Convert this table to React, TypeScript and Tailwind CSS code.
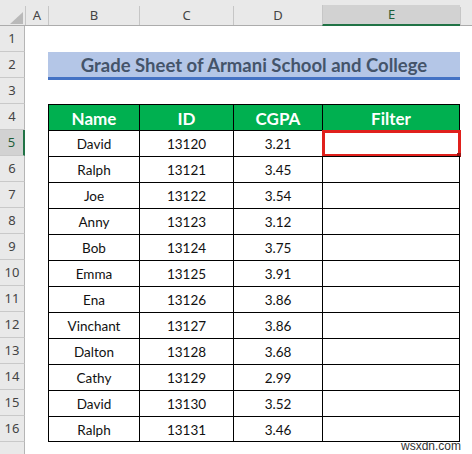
import React from 'react';

// column widths measured from the sheet (px, incl. left grid line)
const COLS = [
  { key: 'A', w: 'w-[23px]' },
  { key: 'B', w: 'w-[91px]' },
  { key: 'C', w: 'w-[94px]' },
  { key: 'D', w: 'w-[89px]' },
  { key: 'E', w: 'w-[138px]' },
];

const STUDENTS: [string, string, string][] = [
  ['David', '13120', '3.21'],
  ['Ralph', '13121', '3.45'],
  ['Joe', '13122', '3.54'],
  ['Anny', '13123', '3.12'],
  ['Bob', '13124', '3.75'],
  ['Emma', '13125', '3.91'],
  ['Ena', '13126', '3.86'],
  ['Vinchant', '13127', '3.86'],
  ['Dalton', '13128', '3.68'],
  ['Cathy', '13129', '2.99'],
  ['David', '13130', '3.52'],
  ['Ralph', '13131', '3.46'],
];

const UI_FONT = "[font-family:'Noto_Sans',sans-serif]";
const CELL_FONT = "[font-family:Lato,'Liberation_Sans',sans-serif]";

function RowHeader({ n, active }: { n: number | null; active?: boolean }) {
  return (
    <div
      className={`w-[25px] h-[26px] shrink-0 flex items-center justify-center border-b border-[#c9c9c9] text-[13px] ${UI_FONT} ${
        active
          ? 'bg-[#d2d2d2] text-[#1e5e3a] border-r-2 border-r-[#217346]'
          : 'bg-[#e9e9e9] text-[#444] border-r border-r-[#b5b5b5]'
      }`}
    >
      {n}
    </div>
  );
}

function ColumnHeaders() {
  return (
    <div className="flex h-[26px] bg-[#e9e9e9] border-b border-[#acacac]">
      <div className="w-[25px] shrink-0 relative">
        <div className="absolute left-[10px] top-[12px] w-0 h-0 border-l-[13px] border-l-transparent border-b-[12px] border-b-[#b9b9b9]" />
      </div>
      {COLS.map((c) => (
        <div key={c.key} className={`${c.w} shrink-0 flex flex-col`}>
          <div className="h-[7px]" />
          <div
            className={`flex-1 flex items-center justify-center border-l border-[#c6c6c6] text-[13px] ${UI_FONT} ${
              c.key === 'E' ? 'bg-[#d2d2d2] text-[#1e5e3a] border-b-2 border-b-[#217346] -mb-px' : 'text-[#444]'
            }`}
          >
            {c.key}
          </div>
        </div>
      ))}
      <div className="flex-1 flex flex-col">
        <div className="h-[7px]" />
        <div className="flex-1 border-l border-[#c6c6c6]" />
      </div>
    </div>
  );
}

function EmptyRow({ n }: { n: number | null }) {
  return (
    <div className="flex h-[26px]">
      <RowHeader n={n} />
    </div>
  );
}

function TitleRow() {
  return (
    <div className="flex h-[26px] items-start">
      <RowHeader n={2} />
      <div className="w-[23px] shrink-0" />
      <div
        className={`w-[412px] h-[28px] shrink-0 bg-[#b4c6e7] border-b-[3px] border-[#4472c4] flex items-center justify-center pt-[2px] text-[18.5px] font-bold text-[#44546a] ${CELL_FONT}`}
      >
        Grade Sheet of Armani School and College
      </div>
    </div>
  );
}

function TableRow({ n, cells, head, last, active }: { n: number; cells: string[]; head?: boolean; last?: boolean; active?: boolean }) {
  return (
    <div className="flex h-[26px]">
      <RowHeader n={n} active={active} />
      <div className="w-[23px] shrink-0" />
      {cells.map((t, i) => (
        <div
          key={i}
          className={`${COLS[i + 1].w} shrink-0 relative flex items-center justify-center pt-[2px] border-l border-t border-black ${CELL_FONT} ${
            i === 3 ? 'border-r' : ''
          } ${last ? 'border-b' : ''} ${head ? 'bg-[#00b050] text-white font-bold text-[17px]' : 'bg-white text-[#111] text-[13.5px]'}`}
        >
          {t}
          {active && i === 3 && (
            <div className="absolute -left-px -top-px -right-[2px] -bottom-px border-[3px] border-[#e0201c]">
              <div className="absolute -right-[3px] -bottom-[3px] w-[4px] h-[4px] bg-[#9b1414]" />
            </div>
          )}
        </div>
      ))}
    </div>
  );
}

export default function App() {
  return (
    <div className="relative w-[472px] h-[454px] overflow-hidden bg-white">
      <ColumnHeaders />
      <EmptyRow n={1} />
      <TitleRow />
      <EmptyRow n={3} />
      <TableRow n={4} head cells={['Name', 'ID', 'CGPA', 'Filter']} />
      {STUDENTS.map((s, i) => (
        <TableRow
          key={i}
          n={i + 5}
          cells={[s[0], s[1], s[2], '']}
          active={i === 0}
          last={i === STUDENTS.length - 1}
        />
      ))}
      <EmptyRow n={null} />

      {/* site watermark */}
      <div className="absolute left-[401px] top-[437px] text-[12px] text-[#333] [font-family:'Liberation_Sans',sans-serif]">
        wsxdn.com
      </div>
    </div>
  );
}
